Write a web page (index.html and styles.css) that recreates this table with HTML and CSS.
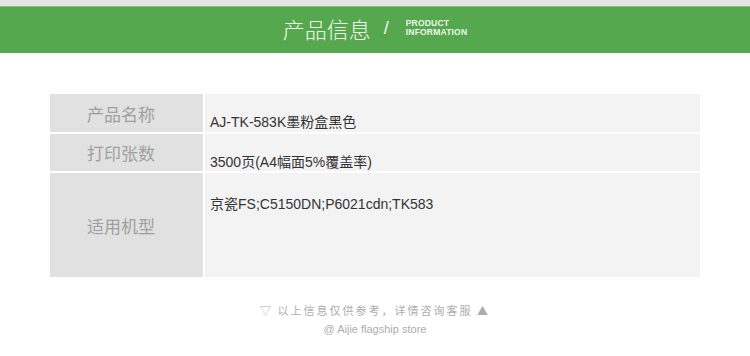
FILE: index.html
```html
<!DOCTYPE html>
<html lang="zh-CN">
<head>
<meta charset="utf-8">
<title>产品信息</title>
<link rel="stylesheet" href="styles.css">
</head>
<body>
<div class="page">
  <div class="topbar"></div>
  <header class="banner">
    <span class="banner-cn">产品信息</span>
    <span class="banner-slash">/</span>
    <span class="banner-en"><span class="en-line">PRODUCT</span><span class="en-line">INFORMATION</span></span>
  </header>
  <main class="specs">
    <div class="label">产品名称</div>
    <div class="value">AJ-TK-583K墨粉盒黑色</div>
    <div class="label">打印张数</div>
    <div class="value">3500页(A4幅面5%覆盖率)</div>
    <div class="label">适用机型</div>
    <div class="value value-tall">京瓷FS;C5150DN;P6021cdn;TK583</div>
  </main>
  <footer class="note">
    <div class="note-line">▽ 以上信息仅供参考，详情咨询客服 ▲</div>
    <div class="note-store">@ Aijie flagship store</div>
  </footer>
</div>
</body>
</html>
```

FILE: styles.css
```css
html, body {
  margin: 0;
  padding: 0;
  background: #ffffff;
}

.page {
  width: 750px;
  height: 356px;
  overflow: hidden;
  font-family: "Liberation Sans", "Noto Sans CJK SC", sans-serif;
}

.topbar {
  height: 6px;
  background: #e5e5e5;
}

.banner {
  height: 41px;
  padding-bottom: 5px;
  border-top: 1px solid #86c27c;
  background: #56a84f;
  display: flex;
  align-items: center;
  justify-content: center;
  color: #eef7ea;
}

.banner-cn {
  font-family: "Noto Sans CJK SC", sans-serif;
  font-weight: 300;
  font-size: 22px;
  line-height: 22px;
}

.banner-slash {
  font-family: "Liberation Sans", sans-serif;
  font-size: 18px;
  line-height: 18px;
  margin: 0 17px 0 13px;
}

.banner-en {
  display: flex;
  flex-direction: column;
  font-family: "Liberation Sans", sans-serif;
  font-weight: 700;
  font-size: 8.5px;
  letter-spacing: 0.2px;
  margin-top: 1px;
}

.en-line {
  display: block;
  line-height: 9px;
  height: 9px;
}

.specs {
  margin: 41px 0 0 50px;
  width: 650px;
  display: grid;
  grid-template-columns: 153px 495px;
  grid-template-rows: 38px 37px 104px;
  gap: 2px;
}

.label {
  background: #e1e1e1;
  color: #a0a0a0;
  font-family: "Noto Sans CJK SC", sans-serif;
  font-size: 17px;
  display: flex;
  align-items: center;
  padding-left: 37px;
}

.value {
  background: #f3f3f3;
  color: #333333;
  font-size: 14px;
  line-height: 20px;
  padding: 18px 0 0 5px;
  white-space: nowrap;
}

.value-tall {
  padding-top: 21px;
}

.note {
  margin-top: 26px;
  text-align: center;
  color: #adadad;
}

.note-line {
  font-family: "Noto Sans CJK SC", sans-serif;
  font-size: 11px;
  line-height: 14px;
  letter-spacing: 2px;
}

.note-store {
  font-size: 11px;
  line-height: 14px;
  margin-top: 5px;
}
```
